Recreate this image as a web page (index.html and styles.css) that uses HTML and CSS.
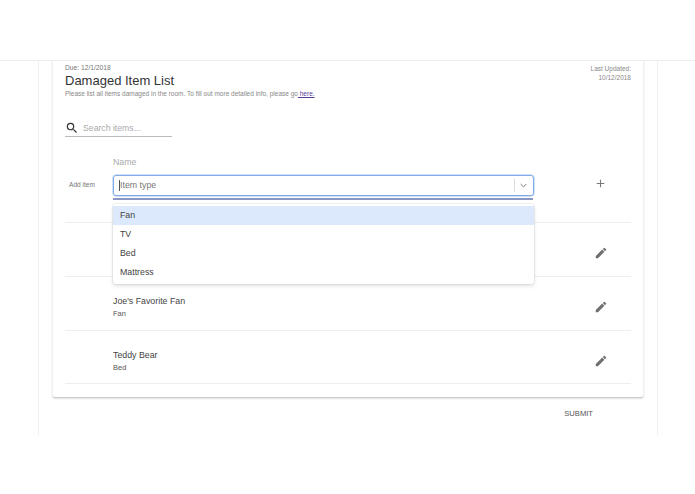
FILE: index.html
```html
<!DOCTYPE html>
<html lang="en">
<head>
<meta charset="utf-8">
<title>Damaged Item List</title>
<link rel="stylesheet" href="styles.css">
</head>
<body>
<div class="topbar"></div>
<div class="shell">
  <main class="card">
    <header class="head">
      <div>
        <div class="due">Due: 12/1/2018</div>
        <h1 class="title">Damaged Item List</h1>
        <p class="desc">Please list all items damaged in the room. To fill out more detailed info, please go<a class="link" href="#"> here.</a></p>
      </div>
      <div class="updated">Last Updated:<br>10/12/2018</div>
    </header>
    <div class="search">
      <svg class="search-icon" viewBox="0 0 24 24" width="14" height="14"><path fill="#333" d="M15.5 14h-.79l-.28-.27A6.47 6.47 0 0 0 16 9.5 6.5 6.5 0 1 0 9.5 16c1.61 0 3.09-.59 4.23-1.57l.27.28v.79l5 4.99L20.49 19l-4.99-5zm-6 0C7.01 14 5 11.99 5 9.5S7.01 5 9.5 5 14 7.01 14 9.5 11.99 14 9.5 14z"/></svg>
      <span class="search-text">Search items...</span>
    </div>
    <section class="add">
      <div class="add-label">Add item</div>
      <div class="add-main">
        <div class="name-label">Name</div>
        <div class="select">
          <span class="caret"></span><span class="select-text">Item type</span>
          <span class="sep"></span>
          <svg class="chev" viewBox="0 0 10 6" width="7" height="5"><path d="M1 1l4 4 4-4" fill="none" stroke="#777" stroke-width="1.4"/></svg>
        </div>
        <div class="underline"></div>
        <ul class="menu">
          <li class="opt active">Fan</li>
          <li class="opt">TV</li>
          <li class="opt">Bed</li>
          <li class="opt">Mattress</li>
        </ul>
      </div>
      <div class="action">
        <svg viewBox="0 0 24 24" width="13" height="13"><path fill="#777" d="M19 13h-6v6h-2v-6H5v-2h6V5h2v6h6v2z"/></svg>
      </div>
    </section>
    <div class="row">
      <div class="row-main"></div>
      <div class="action"><svg class="pen" viewBox="0 0 24 24" width="14" height="14"><path d="M3 17.25V21h3.75L17.81 9.94l-3.75-3.75L3 17.25zM20.71 7.04a1 1 0 0 0 0-1.41l-2.34-2.34a1 1 0 0 0-1.41 0l-1.83 1.83 3.75 3.75 1.83-1.83z"/></svg></div>
    </div>
    <div class="row">
      <div class="row-main"><div class="row-name">Joe's Favorite Fan</div><div class="row-type">Fan</div></div>
      <div class="action"><svg class="pen" viewBox="0 0 24 24" width="14" height="14"><path d="M3 17.25V21h3.75L17.81 9.94l-3.75-3.75L3 17.25zM20.71 7.04a1 1 0 0 0 0-1.41l-2.34-2.34a1 1 0 0 0-1.41 0l-1.83 1.83 3.75 3.75 1.83-1.83z"/></svg></div>
    </div>
    <div class="row">
      <div class="row-main"><div class="row-name">Teddy Bear</div><div class="row-type">Bed</div></div>
      <div class="action"><svg class="pen" viewBox="0 0 24 24" width="14" height="14"><path d="M3 17.25V21h3.75L17.81 9.94l-3.75-3.75L3 17.25zM20.71 7.04a1 1 0 0 0 0-1.41l-2.34-2.34a1 1 0 0 0-1.41 0l-1.83 1.83 3.75 3.75 1.83-1.83z"/></svg></div>
    </div>
  </main>
  <div class="foot"><span class="submit">SUBMIT</span></div>
</div>
</body>
</html>
```
FILE: styles.css
```css
* { box-sizing: border-box; }
html, body { margin: 0; padding: 0; background: #fff; }
body {
  height: 494px;
  overflow: hidden;
  font-family: "Liberation Sans", Arial, sans-serif;
  color: #333;
}
.topbar { height: 61px; border-bottom: 1px solid #eee; }
.shell {
  margin-left: 38px;
  width: 620px;
  height: 374px;
  border-left: 1px solid #eee;
  border-right: 1px solid #eee;
  padding: 0 13px;
}
.card {
  height: 337px;
  background: #fff;
  border-left: 1px solid #f0f0f0;
  border-right: 1px solid #f0f0f0;
  border-bottom: 1px solid #ccc;
  border-radius: 0 0 3px 3px;
  box-shadow: 0 1px 2px rgba(0,0,0,.12);
  padding: 3px 12px 0;
}
.head { display: flex; justify-content: space-between; height: 56px; }
.due { font-size: 6.7px; line-height: 8px; color: #777; }
.title { margin: 0; font-size: 13px; line-height: 17px; font-weight: 400; color: #333; }
.desc { margin: 0; font-size: 6.5px; line-height: 9px; color: #888; }
.link { color: #5b3a95; text-decoration: underline; }
.updated { font-size: 6.5px; line-height: 9px; color: #888; text-align: right; }
.search {
  display: flex;
  align-items: center;
  width: 107px;
  height: 17px;
  border-bottom: 1px solid #bbb;
  gap: 3px;
}
.search-icon { flex: none; }
.search-text { font-size: 8.7px; color: #aaa; margin-left: 1px; }
.add { display: flex; margin-top: 19px; height: 66px; }
.add-label { width: 48px; padding-top: 24px; font-size: 6.6px; line-height: 9px; color: #777; padding-left: 4px; }
.add-main { position: relative; width: 421px; }
.name-label { font-size: 8.8px; line-height: 12px; color: #aaa; height: 19px; }
.select {
  display: flex;
  align-items: center;
  height: 21px;
  border: 1px solid #7fabe8;
  border-radius: 3px;
  box-shadow: 0 0 0 .5px #a5c4f0;
  padding-left: 5px;
}
.caret { width: 1px; height: 11px; background: #555; flex: none; }
.select-text { font-size: 8.8px; line-height: 11px; color: #777; flex: 1; margin-top: -1px; }
.sep { width: 1px; height: 13px; background: #ddd; }
.chev { margin: 0 6px 0 5px; flex: none; }
.underline { height: 2px; margin-top: 2px; margin-right: 1px; background: #8a97c4; }
.menu {
  position: absolute;
  left: 0;
  top: 48px;
  width: 421px;
  margin: 0;
  padding: 2px 0;
  list-style: none;
  background: #fff;
  border-radius: 3px;
  box-shadow: 0 0 0 1px rgba(0,0,0,.05), 0 2px 4px rgba(0,0,0,.12);
  z-index: 2;
}
.opt { height: 19px; padding-left: 7px; font-size: 8.8px; line-height: 19px; color: #444; }
.active { background: #dce9fc; }
.action { width: 33px; margin-left: 49px; display: flex; align-items: center; justify-content: center; height: 100%; }
.add .action { height: 21px; margin-top: 17px; margin-left: 50px; }
.row {
  display: flex;
  height: 54px;
  border-top: 1px solid #eee;
  padding-left: 48px;
}
.row .action { padding: 7px 0 0 3px; }
.row:last-child { border-bottom: 1px solid #eee; }
.row-main { width: 421px; padding-top: 18px; }
.row-name { font-size: 8.8px; line-height: 12px; color: #444; }
.row-type { font-size: 7.5px; line-height: 10px; margin-top: 2px; color: #555; }
.pen { fill: #707070; }
.foot { display: flex; justify-content: flex-end; padding: 11px 51px 0 0; }
.submit { font-size: 7.6px; line-height: 10px; color: #555; }
```
